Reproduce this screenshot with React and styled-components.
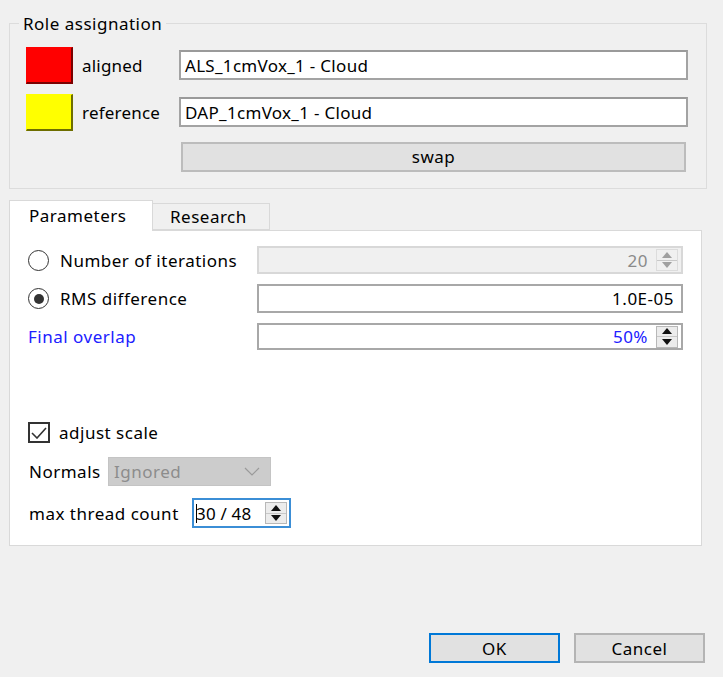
import React from "react";
import styled, { createGlobalStyle } from "styled-components";

const Global = createGlobalStyle`
  html, body {
    margin: 0;
    padding: 0;
    background: #f0f0f0;
  }
  body {
    font-family: "Noto Sans", "Open Sans", sans-serif;
    font-size: 17px;
    letter-spacing: 0.5px;
    color: #000;
  }
`;

function SpinArrows({ disabled }) {
  return (
    <SpinBox $disabled={disabled}>
      <SpinHalf>
        <svg width="10" height="6" viewBox="0 0 10 6">
          <path d="M0 6 L5 0 L10 6 Z" />
        </svg>
      </SpinHalf>
      <SpinHalf $bottom>
        <svg width="10" height="6" viewBox="0 0 10 6">
          <path d="M0 0 L5 6 L10 0 Z" />
        </svg>
      </SpinHalf>
    </SpinBox>
  );
}

export default function App() {
  return (
    <Dialog>
      <Global />
      <GroupBox>
        <Legend>Role assignation</Legend>
        <RoleGrid>
          <Swatch $color="#ff0000" $edge="#7a0000" />
          <RoleLabel>aligned</RoleLabel>
          <LineEdit>ALS_1cmVox_1 - Cloud</LineEdit>
          <Swatch $color="#ffff00" $edge="#6e6e00" />
          <RoleLabel>reference</RoleLabel>
          <LineEdit>DAP_1cmVox_1 - Cloud</LineEdit>
          <span />
          <span />
          <SwapButton>swap</SwapButton>
        </RoleGrid>
      </GroupBox>

      <TabWidget>
        <TabBar>
          <Tab $active>Parameters</Tab>
          <Tab>Research</Tab>
        </TabBar>
        <TabPanel>
          <ParamGrid>
            <RadioRow>
              <Radio />
              <span>Number of iterations</span>
            </RadioRow>
            <Field $disabled>
              <FieldValue $color="#8a8a8a">20</FieldValue>
              <SpinArrows disabled />
            </Field>

            <RadioRow>
              <Radio $checked />
              <span>RMS difference</span>
            </RadioRow>
            <Field>
              <FieldValue $pad="4px">1.0E-05</FieldValue>
            </Field>

            <BlueLabel>Final overlap</BlueLabel>
            <Field>
              <FieldValue $color="#2020ff">50%</FieldValue>
              <SpinArrows />
            </Field>
          </ParamGrid>

          <Spacer />

          <CheckRow>
            <CheckBox>
              <svg width="16" height="12" viewBox="0 0 16 12">
                <path d="M1 6 L6 11 L15 1" fill="none" stroke="#333" strokeWidth="1.6" />
              </svg>
            </CheckBox>
            <span>adjust scale</span>
          </CheckRow>

          <InlineRow>
            <SmallLabel $width="80px">Normals</SmallLabel>
            <Combo>
              <span>Ignored</span>
              <svg width="16" height="9" viewBox="0 0 16 9">
                <path d="M1 1 L8 8 L15 1" fill="none" stroke="#9a9a9a" strokeWidth="1.2" />
              </svg>
            </Combo>
          </InlineRow>

          <InlineRow>
            <SmallLabel $width="164px">max thread count</SmallLabel>
            <ThreadSpin>
              <Caret />
              <span>30 / 48</span>
              <SpinArrows />
            </ThreadSpin>
          </InlineRow>
        </TabPanel>
      </TabWidget>

      <ButtonBar>
        <DialogButton $default>OK</DialogButton>
        <DialogButton>Cancel</DialogButton>
      </ButtonBar>
    </Dialog>
  );
}

const Dialog = styled.div`
  width: 723px;
  height: 677px;
  box-sizing: border-box;
  padding: 12px 16px 0 9px;
  display: flex;
  flex-direction: column;
`;

const GroupBox = styled.fieldset`
  margin: 0;
  padding: 11px 18px 14px 16px;
  border: 1px solid #dcdcdc;
  height: 177px;
  box-sizing: border-box;
`;

const Legend = styled.legend`
  padding: 0 4px;
  margin-left: -7px;
  font-size: 17px;
`;

const RoleGrid = styled.div`
  display: grid;
  grid-template-columns: 47px 106px 1fr;
  grid-template-rows: 38px 38px 30px;
  row-gap: 9px;
  align-items: center;
`;

const Swatch = styled.div`
  height: 37px;
  box-sizing: border-box;
  background: ${(p) => p.$color};
  border-right: 2px solid ${(p) => p.$edge};
  border-bottom: 2px solid ${(p) => p.$edge};
  border-top: 1px solid ${(p) => p.$color};
  border-left: 1px solid ${(p) => p.$color};
`;

const RoleLabel = styled.span`
  padding-left: 9px;
  letter-spacing: 0.2px;
`;

const LineEdit = styled.div`
  height: 30px;
  box-sizing: border-box;
  border: 2px solid #a3a3a3;
  border-top-color: #9a9a9a;
  background: #fff;
  display: flex;
  align-items: center;
  padding-left: 4px;
  letter-spacing: 0.3px;
`;

const SwapButton = styled.div`
  height: 30px;
  margin: 3px 2px 0;
  box-sizing: border-box;
  border: 2px solid #bcbcbc;
  background: #e1e1e1;
  display: flex;
  align-items: center;
  justify-content: center;
`;

const TabWidget = styled.div`
  margin-top: 11px;
  width: 693px;
  display: flex;
  flex-direction: column;
`;

const TabBar = styled.div`
  display: flex;
  align-items: flex-end;
  height: 30px;
  position: relative;
  z-index: 1;
`;

const Tab = styled.div`
  box-sizing: border-box;
  height: ${(p) => (p.$active ? "31px" : "27px")};
  width: ${(p) => (p.$active ? "144px" : "117px")};
  margin-bottom: ${(p) => (p.$active ? "-1px" : "0")};
  background: ${(p) => (p.$active ? "#ffffff" : "#f0f0f0")};
  border: 1px solid #d9d9d9;
  border-bottom: ${(p) => (p.$active ? "none" : "1px solid #d9d9d9")};
  border-left: ${(p) => (p.$active ? "1px solid #d9d9d9" : "none")};
  padding-left: ${(p) => (p.$active ? "19px" : "17px")};
  padding-top: ${(p) => (p.$active ? "3px" : "1px")};
`;

const TabPanel = styled.div`
  background: #fff;
  border: 1px solid #d9d9d9;
  height: 316px;
  box-sizing: border-box;
  padding: 15px 18px 17px 18px;
  display: flex;
  flex-direction: column;
`;

const ParamGrid = styled.div`
  display: grid;
  grid-template-columns: 229px 1fr;
  grid-template-rows: 28px 29px 27px;
  row-gap: 10px;
  align-items: center;
`;

const RadioRow = styled.label`
  display: flex;
  align-items: center;
  gap: 11px;
`;

const Radio = styled.span`
  width: 21px;
  height: 21px;
  box-sizing: border-box;
  border-radius: 50%;
  border: 1.5px solid #333;
  background: #fff;
  display: flex;
  align-items: center;
  justify-content: center;
  &::after {
    content: "";
    width: 10px;
    height: 10px;
    border-radius: 50%;
    background: ${(p) => (p.$checked ? "#333" : "transparent")};
  }
`;

const BlueLabel = styled.span`
  color: #2020ff;
`;

const Field = styled.div`
  height: 100%;
  box-sizing: border-box;
  border: ${(p) => (p.$disabled ? "2px solid #d8d8d8" : "2px solid #a8a8a8")};
  background: ${(p) => (p.$disabled ? "#f0f0f0" : "#fff")};
  display: flex;
  align-items: center;
  justify-content: flex-end;
  padding-right: 3px;
  gap: 8px;
`;

const FieldValue = styled.span`
  color: ${(p) => p.$color || "#000"};
  padding-right: ${(p) => p.$pad || "0"};
`;

const SpinBox = styled.div`
  width: 22px;
  height: 22px;
  box-sizing: border-box;
  border: 1px solid ${(p) => (p.$disabled ? "#dcdcdc" : "#b8b8b8")};
  background: ${(p) => (p.$disabled ? "#f0f0f0" : "#ececec")};
  display: flex;
  flex-direction: column;
  fill: ${(p) => (p.$disabled ? "#a0a0a0" : "#111")};
`;

const SpinHalf = styled.div`
  flex: 1;
  display: flex;
  align-items: center;
  justify-content: center;
  border-top: ${(p) => (p.$bottom ? "1px solid #c8c8c8" : "none")};
  svg {
    width: 10px;
    height: 6px;
  }
`;

const Spacer = styled.div`
  flex: 1;
`;

const CheckRow = styled.label`
  display: flex;
  align-items: center;
  gap: 9px;
  margin-bottom: 13px;
`;

const CheckBox = styled.span`
  width: 22px;
  height: 21px;
  box-sizing: border-box;
  border: 2px solid #333;
  background: #fff;
  display: flex;
  align-items: center;
  justify-content: center;
`;

const InlineRow = styled.div`
  display: flex;
  align-items: center;
  margin-bottom: 12px;
  &:last-child {
    margin-bottom: 0;
  }
`;

const SmallLabel = styled.span`
  width: ${(p) => p.$width};
  padding-left: 1px;
  box-sizing: border-box;
  white-space: nowrap;
`;

const Combo = styled.div`
  width: 163px;
  height: 29px;
  box-sizing: border-box;
  background: #cccccc;
  border: 1px solid #c4c4c4;
  color: #8c8c8c;
  display: flex;
  align-items: center;
  justify-content: space-between;
  padding: 0 10px 0 5px;
`;

const ThreadSpin = styled.div`
  width: 99px;
  height: 30px;
  box-sizing: border-box;
  border: 2px solid #3b8ed6;
  background: #fff;
  display: flex;
  align-items: center;
  padding: 0 2px 0 2px;
  gap: 2px;
  span {
    flex: 1;
    letter-spacing: 0.2px;
  }
`;

const Caret = styled.i`
  width: 1px;
  height: 19px;
  background: #000;
  margin-right: -3px;
`;

const ButtonBar = styled.div`
  margin-top: auto;
  margin-bottom: 14px;
  margin-right: 2px;
  display: flex;
  justify-content: flex-end;
  gap: 14px;
`;

const DialogButton = styled.div`
  width: 131px;
  height: 30px;
  box-sizing: border-box;
  background: #e1e1e1;
  border: 2px solid ${(p) => (p.$default ? "#0078d7" : "#b4b4b4")};
  display: flex;
  align-items: center;
  justify-content: center;
`;
